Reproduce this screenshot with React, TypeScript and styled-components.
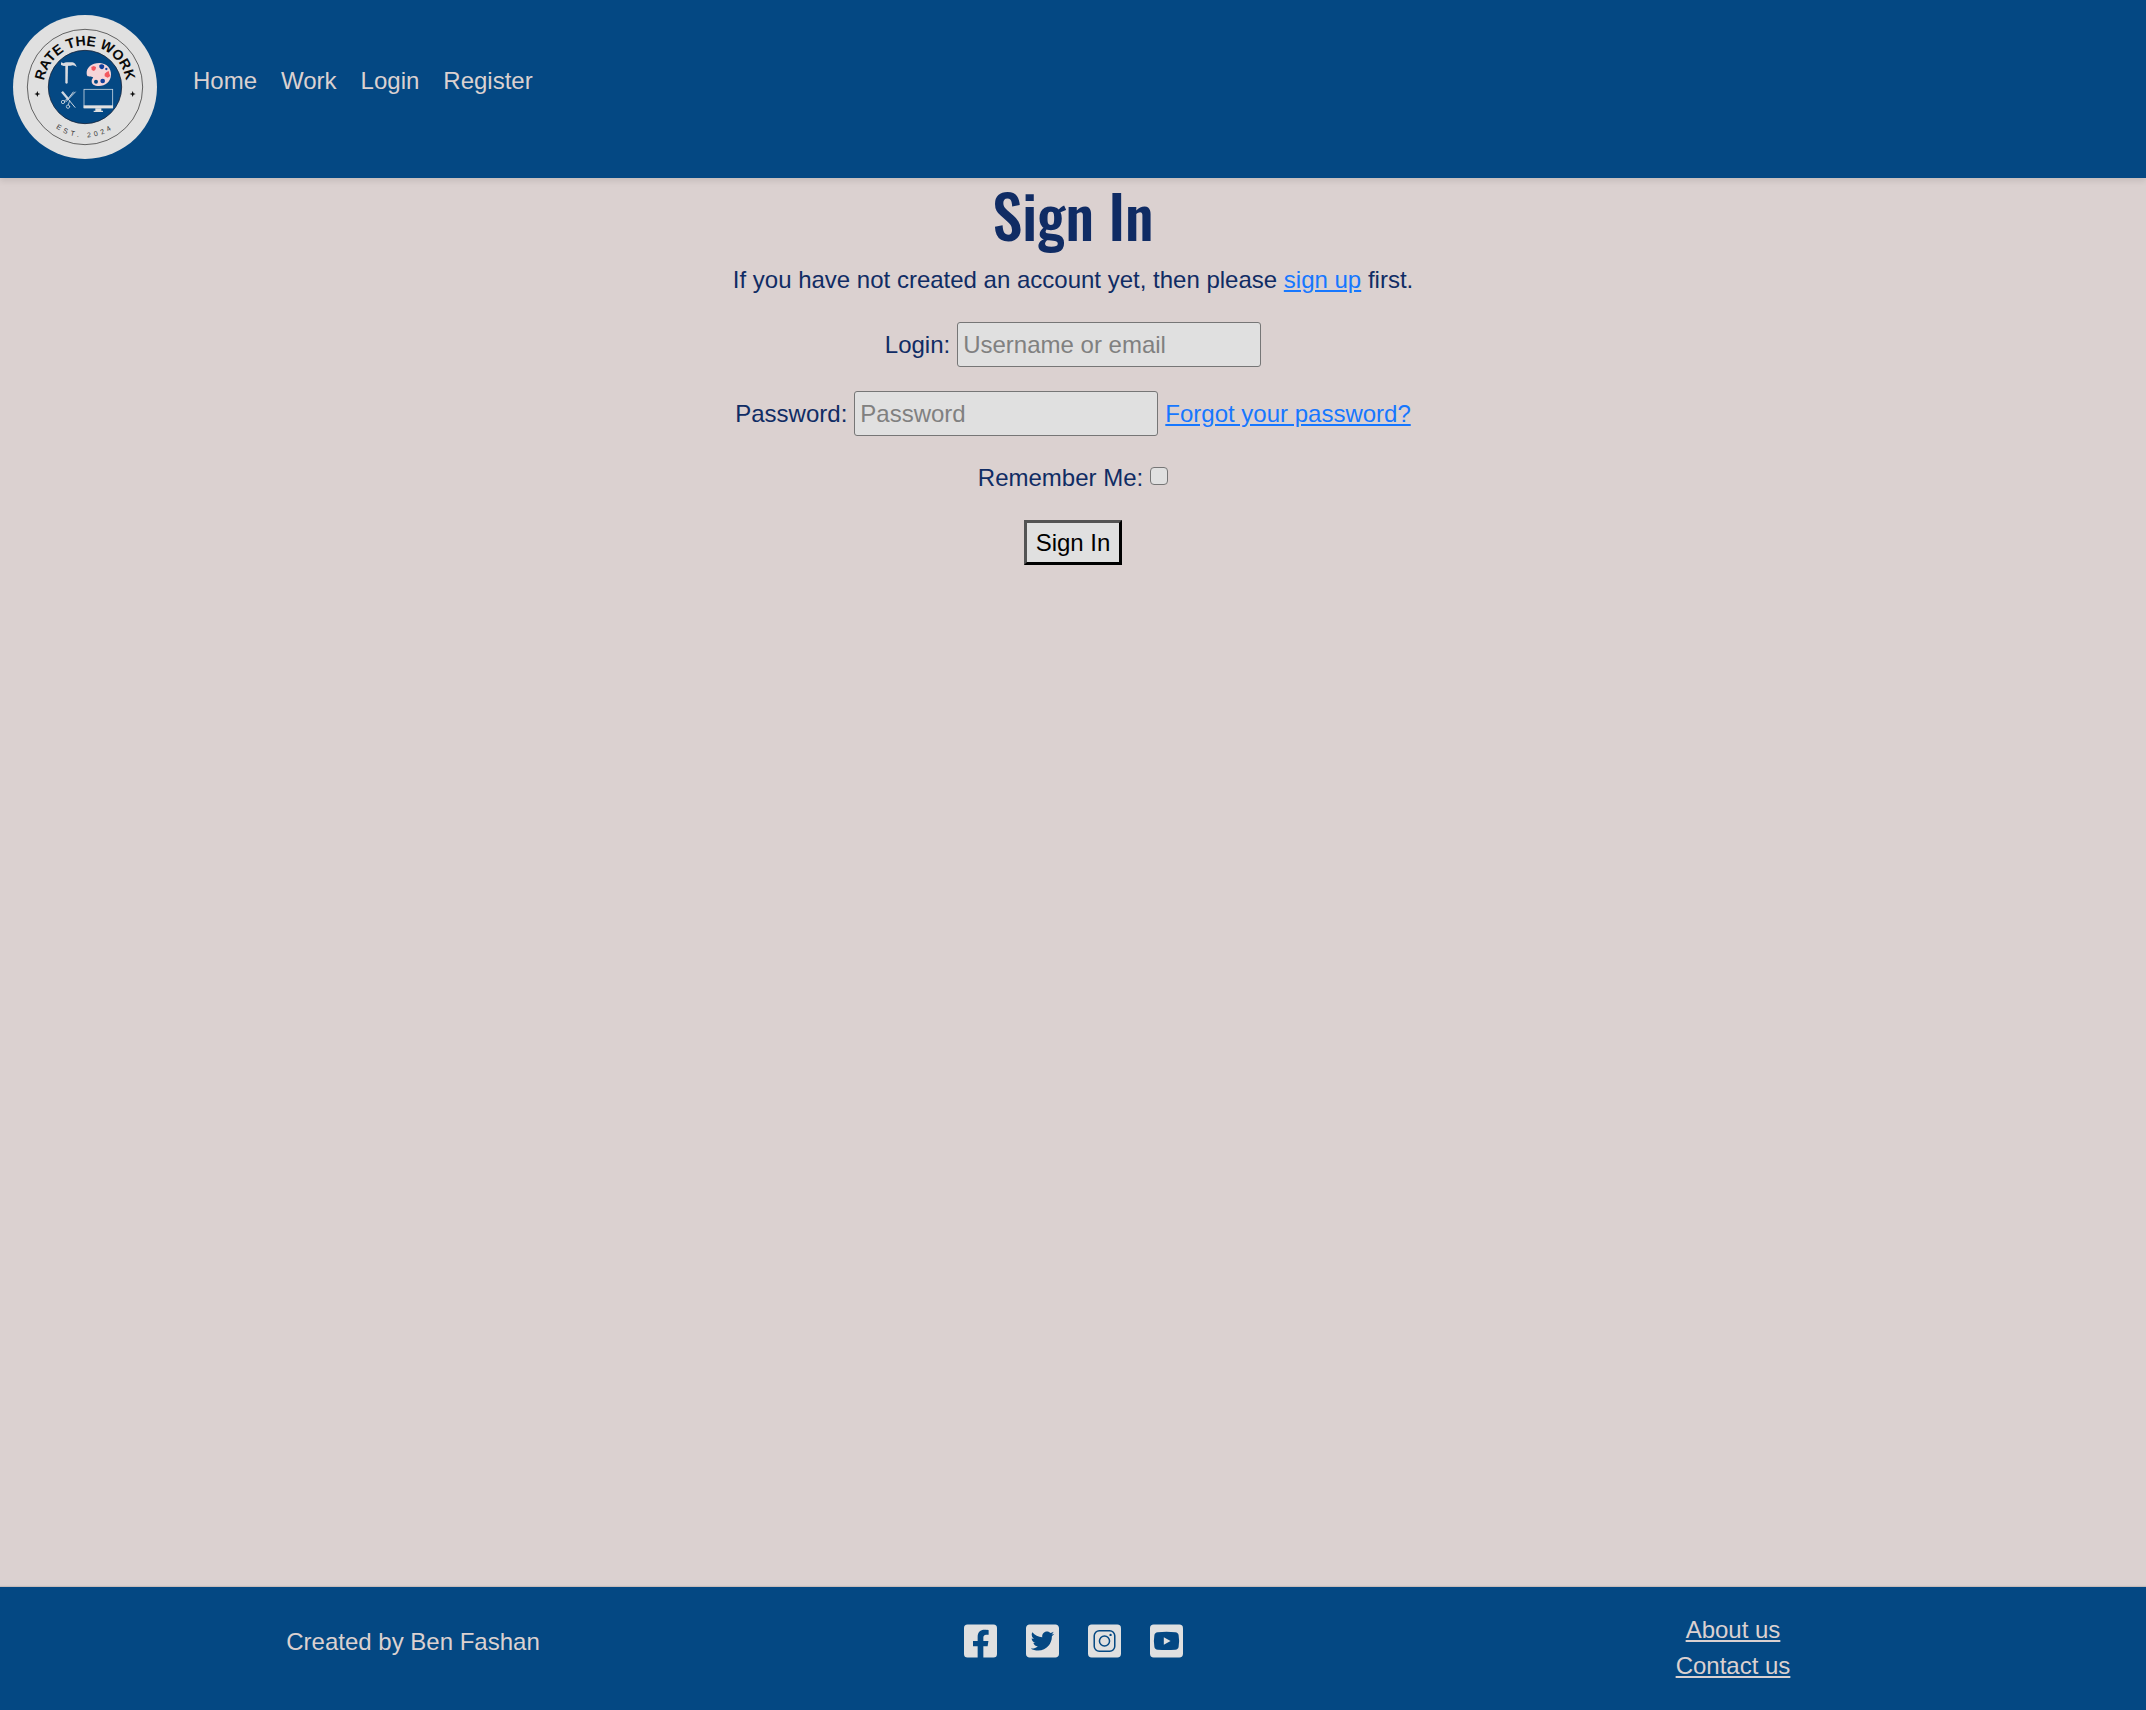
import React from "react";
import styled, { createGlobalStyle } from "styled-components";
import { FaFacebookSquare, FaTwitterSquare } from "react-icons/fa";

const color = {
  blue: "#044883",
  page: "#dbd1d0",
  ink: "#102c64",
  light: "#e0e0e0",
  link: "#1677ff",
};

const GlobalStyle = createGlobalStyle`
  *, *::before, *::after { box-sizing: border-box; }
  body {
    margin: 0;
    background: ${color.page};
    color: ${color.ink};
    font-family: Arial, "Liberation Sans", sans-serif;
    font-size: 24px;
    line-height: 36px;
  }
`;

const Page = styled.div`
  display: flex;
  flex-direction: column;
  min-height: 100vh;
`;

const Header = styled.header`
  display: flex;
  align-items: center;
  gap: 36px;
  padding: 15px 13px 19px;
  background: ${color.blue};
  box-shadow: 0 3px 6px rgba(0, 0, 0, 0.1);
`;

const Brand = styled.a`
  display: block;
  line-height: 0;
`;

const Nav = styled.nav`
  display: flex;
  gap: 24px;
  padding-bottom: 12px;
`;

const NavLink = styled.a`
  color: ${color.page};
  text-decoration: none;
`;

const Main = styled.main`
  flex: 1;
  display: flex;
  flex-direction: column;
  align-items: center;
`;

const Title = styled.h1`
  margin: 0 0 12px;
  font-family: Oswald, "Liberation Sans Narrow", "Liberation Sans", sans-serif;
  font-size: 60px;
  font-weight: 500;
  line-height: 72px;
`;

const Intro = styled.p`
  margin: 0 0 24px;
`;

const TextLink = styled.a`
  color: ${color.link};
`;

const Form = styled.form`
  display: flex;
  flex-direction: column;
  align-items: center;
  gap: 24px;
`;

const Field = styled.div`
  display: flex;
  align-items: center;
  gap: 7px;
`;

const TextInput = styled.input`
  width: 304px;
  height: 45px;
  padding: 1px 5px;
  border: 1px solid #767676;
  border-radius: 3px;
  background: ${color.light};
  color: ${color.ink};
  font: inherit;

  &::placeholder {
    color: #808080;
    opacity: 1;
  }
`;

const CheckBox = styled.input`
  appearance: none;
  width: 18px;
  height: 18px;
  margin: 0 0 4px;
  border: 1px solid #767676;
  border-radius: 4px;
  background: ${color.light};

  &:checked {
    background: ${color.link};
  }
`;

const SubmitButton = styled.button`
  height: 45px;
  padding: 0 9px;
  border: 3px outset #000;
  background: ${color.light};
  color: #000;
  font: inherit;
`;

const Footer = styled.footer`
  background: ${color.blue};
  color: ${color.page};
  box-shadow: 0 -1px 1px rgba(0, 0, 0, 0.1);
`;

const FooterInner = styled.div`
  display: grid;
  grid-template-columns: repeat(3, 1fr);
  justify-items: center;
  max-width: 1980px;
  margin: 0 auto;
  padding: 25px 0 26px;
`;

const Credit = styled.p`
  margin: 12px 0 0;
`;

const Social = styled.div`
  display: flex;
  align-self: start;
  gap: 29px;
  padding-top: 10px;
`;

const SocialLink = styled.a`
  display: block;
  color: ${color.light};
  line-height: 0;

  svg {
    width: 33px;
    height: 38px;
  }
`;

const FooterLinks = styled.nav`
  display: flex;
  flex-direction: column;
  align-items: center;
`;

const FooterLink = styled.a`
  color: ${color.page};
`;

const star = "M0 -9 L2.5 -2.5 L9 0 L2.5 2.5 L0 9 L-2.5 2.5 L-9 0 L-2.5 -2.5 Z";

function Logo() {
  return (
    <svg width="144" height="144" viewBox="0 0 432 432" role="img" aria-label="Rate the Work">
      <defs>
        <path id="arc-top" d="M92 216 A124 124 0 0 1 340 216" />
        <path id="arc-bottom" d="M65 216 A151 151 0 0 0 367 216" />
      </defs>
      <circle cx="216" cy="216" r="216" fill={color.light} />
      <circle cx="216" cy="216" r="173" fill="none" stroke="#222" strokeWidth="2" />
      <circle cx="216" cy="216" r="110" fill={color.blue} stroke="#14243c" strokeWidth="2.5" />
      <text fontFamily="Liberation Sans, sans-serif" fontWeight="700" fontSize="42" fill="#0a0a0a" textAnchor="middle">
        <textPath href="#arc-top" startOffset="50%">RATE THE WORK</textPath>
      </text>
      <text fontFamily="Liberation Sans, sans-serif" fontSize="21" fill="#333" textAnchor="middle" letterSpacing="10">
        <textPath href="#arc-bottom" startOffset="50%">EST. 2024</textPath>
      </text>
      <path d={star} fill="#0a0a0a" transform="translate(73 237)" />
      <path d={star} fill="#0a0a0a" transform="translate(359 237)" />

      {/* hammer */}
      <g fill="#d9dbe0">
        <path d="M144 142 L152 145 Q156 141 164 142 L178 142 Q188 144 191 156 Q184 149 173 152 L152 153 L144 150 Z" />
        <path d="M157 150 L165 150 L164 204 Q161 209 157 204 Z" />
      </g>

      {/* palette */}
      <path
        d="M221 177 C219 157 238 143 261 144 C282 146 295 160 294 180 C293 200 277 213 258 213 C244 213 235 207 236 197 C237 189 244 188 238 186 C231 184 223 188 221 177 Z"
        fill="#f6d5d8"
      />
      <g fill="#f4575f">
        <path d="M235 156 L242 153 L249 156 L248 163 L243 168 L236 165 Z" />
        <path d="M275 176 L281 171 L287 168 L289 176 L292 183 L284 188 L275 184 Z" />
      </g>
      <g fill="#123f9b">
        <path d="M259 151 Q266 145 273 151 Q276 157 270 162 Q261 164 259 157 Z" />
        <circle cx="280" cy="162" r="3.5" />
        <circle cx="269" cy="198" r="7" />
      </g>
      <circle cx="249" cy="200" r="6" fill={color.blue} />

      {/* comb and scissors */}
      <g fill="none" stroke="#cfd8e2" strokeLinecap="round">
        <path d="M147 230 L166 253" strokeWidth="7" strokeLinecap="butt" />
        <path d="M166 253 L186 277" strokeWidth="3" />
        <path d="M187 231 L159 260 M181 231 L167 249" strokeWidth="3" />
        <path d="M162 252 L154 258 M170 257 L166 269" strokeWidth="2.5" />
        <circle cx="150" cy="261" r="5" strokeWidth="2.5" />
        <circle cx="165" cy="275" r="5" strokeWidth="2.5" />
      </g>

      {/* monitor */}
      <rect x="213" y="223" width="86" height="55" fill="none" stroke="#c5d3e0" strokeWidth="2.5" />
      <rect x="212" y="271" width="88" height="9" fill={color.light} />
      <path d="M247 280 H265 V287 H270 V291 H242 V287 H247 Z" fill={color.light} />
    </svg>
  );
}

function InstagramTile() {
  return (
    <svg viewBox="0 0 98 98" aria-hidden="true">
      <rect width="98" height="98" rx="11" fill="currentColor" />
      <g fill="none" stroke={color.blue} strokeWidth="4.5">
        <rect x="18.5" y="18.5" width="61" height="61" rx="15" />
        <circle cx="49" cy="49" r="15" />
      </g>
      <circle cx="67" cy="31" r="3.5" fill={color.blue} />
    </svg>
  );
}

function YoutubeTile() {
  return (
    <svg viewBox="0 0 98 98" aria-hidden="true">
      <rect width="98" height="98" rx="11" fill="currentColor" />
      <path
        d="M23 23 Q49 20 75 23 Q84 24 85 32 Q88 49 85 66 Q84 74 75 75 Q49 77 23 75 Q14 74 13 66 Q10 49 13 32 Q14 24 23 23 Z"
        fill={color.blue}
      />
      <path d="M41 38 L61 49 L41 60 Z" fill="currentColor" />
    </svg>
  );
}

const navItems = ["Home", "Work", "Login", "Register"];

const socials = [
  { name: "Facebook", Icon: FaFacebookSquare },
  { name: "Twitter", Icon: FaTwitterSquare },
  { name: "Instagram", Icon: InstagramTile },
  { name: "YouTube", Icon: YoutubeTile },
];

export default function App() {
  return (
    <>
      <GlobalStyle />
      <Page>
        <Header>
          <Brand href="#">
            <Logo />
          </Brand>
          <Nav>
            {navItems.map((item) => (
              <NavLink key={item} href="#">{item}</NavLink>
            ))}
          </Nav>
        </Header>
        <Main>
          <Title>Sign In</Title>
          <Intro>
            If you have not created an account yet, then please <TextLink href="#">sign up</TextLink> first.
          </Intro>
          <Form onSubmit={(e) => e.preventDefault()}>
            <Field>
              <label htmlFor="login">Login:</label>
              <TextInput id="login" type="text" placeholder="Username or email" />
            </Field>
            <Field>
              <label htmlFor="password">Password:</label>
              <TextInput id="password" type="password" placeholder="Password" />
              <TextLink href="#">Forgot your password?</TextLink>
            </Field>
            <Field>
              <label htmlFor="remember">Remember Me:</label>
              <CheckBox id="remember" type="checkbox" />
            </Field>
            <SubmitButton type="submit">Sign In</SubmitButton>
          </Form>
        </Main>
        <Footer>
          <FooterInner>
            <Credit>Created by Ben Fashan</Credit>
            <Social>
              {socials.map(({ name, Icon }) => (
                <SocialLink key={name} href="#" aria-label={name}>
                  <Icon />
                </SocialLink>
              ))}
            </Social>
            <FooterLinks>
              <FooterLink href="#">About us</FooterLink>
              <FooterLink href="#">Contact us</FooterLink>
            </FooterLinks>
          </FooterInner>
        </Footer>
      </Page>
    </>
  );
}
